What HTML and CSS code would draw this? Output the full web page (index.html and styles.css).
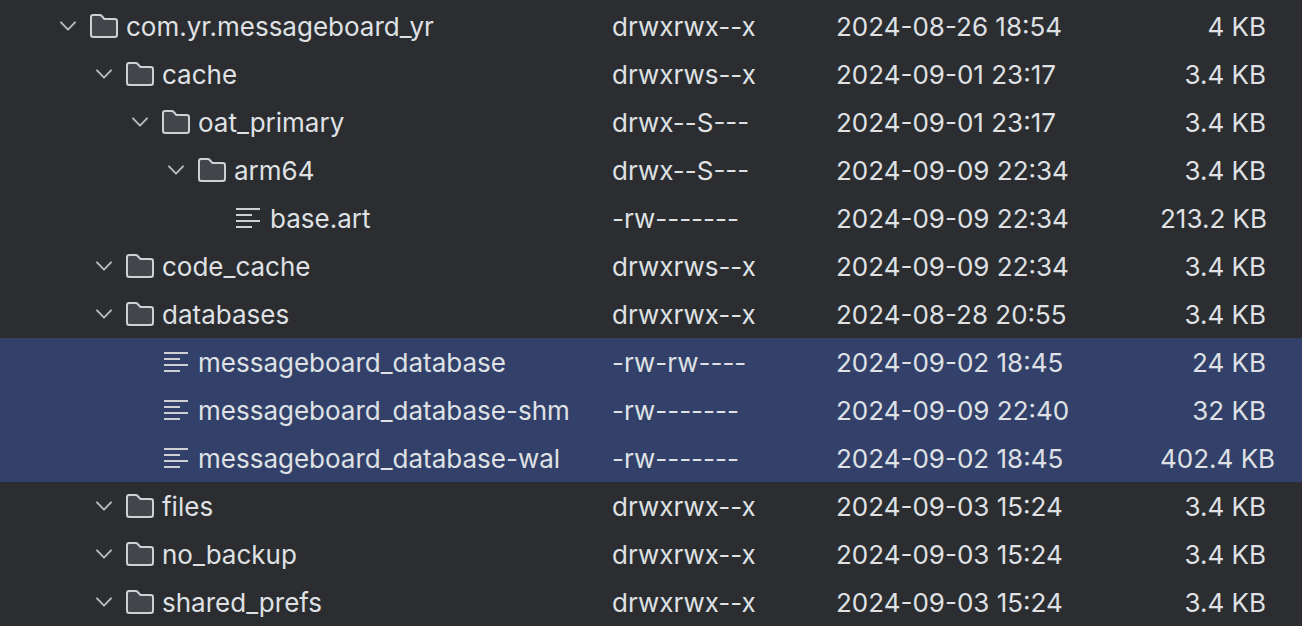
FILE: index.html
```html
<!DOCTYPE html>
<html lang="en">
<head>
<meta charset="utf-8">
<title>Device Explorer</title>
<link rel="stylesheet" href="styles.css">
<script src="files.js" defer></script>
</head>
<body>
<svg class="symbols" aria-hidden="true">
  <symbol id="chevron" viewBox="0 0 16 16"><path d="M4.5 6.2 L8 9.8 L11.5 6.2" fill="none" stroke="#b4b8bf" stroke-linecap="round" stroke-linejoin="round"/></symbol>
  <symbol id="folder" viewBox="0 0 16 16"><path d="M8.1 4.35 L8.25 4.5 H13.4 C14 4.5 14.5 5 14.5 5.6 V12.4 C14.5 13 14 13.5 13.4 13.5 H2.6 C2 13.5 1.5 13 1.5 12.4 V3.6 C1.5 3 2 2.5 2.6 2.5 H6.1 C6.26 2.5 6.39 2.56 6.48 2.65 Z" fill="#43454a" stroke="#ced0d6"/></symbol>
  <symbol id="file" viewBox="0 0 16 16"><path d="M2 3.5 H14 M2 6.5 H10 M2 9.5 H14 M2 12.5 H10" fill="none" stroke="#ced0d6"/></symbol>
</svg>
<table class="files" aria-label="Files">
  <colgroup><col><col class="col-mode"><col class="col-date"><col class="col-size"></colgroup>
  <tbody id="rows"></tbody>
</table>
</body>
</html>
```
FILE: styles.css
```css
body {
  margin: 0;
  padding-top: 2px;
  background: #2b2d30;
  color: #dfe1e5;
  font: 26px/32px Inter, sans-serif;
}

.symbols {
  position: absolute;
  width: 0;
  height: 0;
}

.files {
  width: 100%;
  table-layout: fixed;
  border-collapse: collapse;
}

.col-mode { width: 224px; }
.col-date { width: 324px; }
.col-size { width: 142px; }

.files td {
  box-sizing: border-box;
  height: 48px;
  padding: 2px 0 0;
  white-space: nowrap;
}

.files .entry { padding-top: 0; }

.files .size {
  padding-right: 36px;
  text-align: right;
}

.selected { background: #33416a; }

.name {
  display: flex;
  align-items: center;
  padding-left: 52px;
}

.level-1 { padding-left: 88px; }
.level-2 { padding-left: 124px; }
.level-3 { padding-left: 160px; }
.level-4 { padding-left: 196px; }

.toggle {
  display: flex;
  width: 32px;
  height: 32px;
  margin-right: 4px;
  padding: 0;
  border: 0;
  background: none;
}

.leaf { visibility: hidden; }

.icon {
  flex: none;
  width: 32px;
  height: 32px;
}

.label { padding: 2px 0 0 6px; }
```
FILE: files.js
```js
const files = [
  [0, "folder", "com.yr.messageboard_yr", "drwxrwx--x", "2024-08-26 18:54", "4 KB"],
  [1, "folder", "cache", "drwxrws--x", "2024-09-01 23:17", "3.4 KB"],
  [2, "folder", "oat_primary", "drwx--S---", "2024-09-01 23:17", "3.4 KB"],
  [3, "folder", "arm64", "drwx--S---", "2024-09-09 22:34", "3.4 KB"],
  [4, "file", "base.art", "-rw-------", "2024-09-09 22:34", "213.2 KB"],
  [1, "folder", "code_cache", "drwxrws--x", "2024-09-09 22:34", "3.4 KB"],
  [1, "folder", "databases", "drwxrwx--x", "2024-08-28 20:55", "3.4 KB"],
  [2, "file", "messageboard_database", "-rw-rw----", "2024-09-02 18:45", "24 KB", true],
  [2, "file", "messageboard_database-shm", "-rw-------", "2024-09-09 22:40", "32 KB", true],
  [2, "file", "messageboard_database-wal", "-rw-------", "2024-09-02 18:45", "402.4 KB", true],
  [1, "folder", "files", "drwxrwx--x", "2024-09-03 15:24", "3.4 KB"],
  [1, "folder", "no_backup", "drwxrwx--x", "2024-09-03 15:24", "3.4 KB"],
  [1, "folder", "shared_prefs", "drwxrwx--x", "2024-09-03 15:24", "3.4 KB"]
];

const icon = id => `<svg class="icon" aria-hidden="true"><use href="#${id}"/></svg>`;

document.getElementById("rows").innerHTML = files.map(([level, kind, name, mode, date, size, selected]) => `
  <tr${selected ? ' class="selected"' : ""}>
    <td class="entry"><div class="name level-${level}">${kind === "folder"
      ? `<button class="toggle" aria-label="Toggle ${name}" aria-expanded="true">${icon("chevron")}</button>`
      : '<span class="toggle leaf"></span>'}${icon(kind)}<span class="label">${name}</span></div></td>
    <td>${mode}</td>
    <td>${date}</td>
    <td class="size">${size}</td>
  </tr>`).join("");
```
